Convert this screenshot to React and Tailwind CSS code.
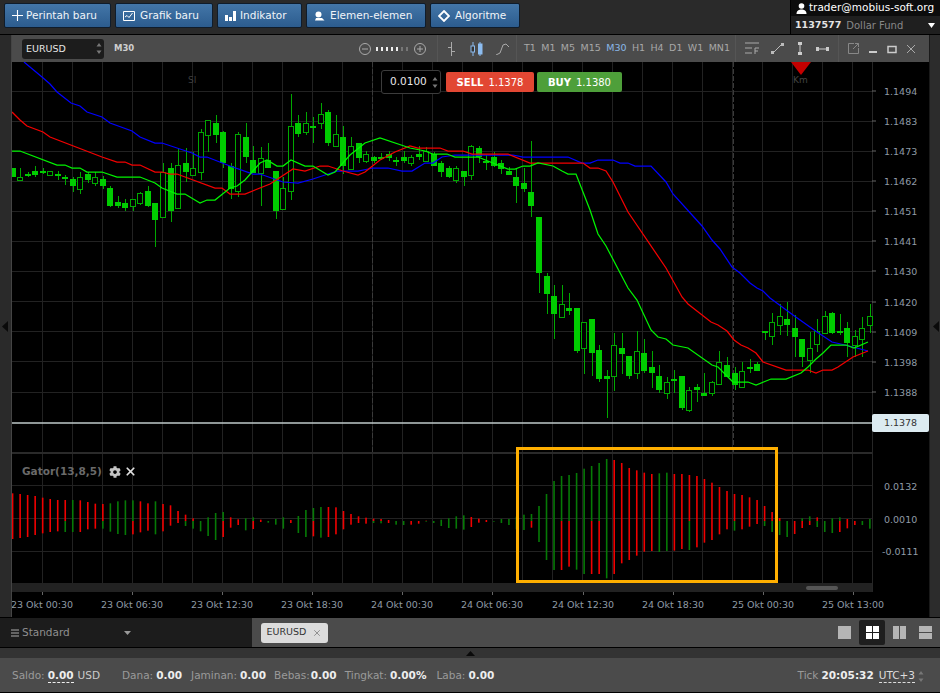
import { X } from 'lucide-react'
import { FaCog } from 'react-icons/fa'

// candles: [wickTop, bodyTop, bodyBottom, wickBottom, hollow]
const CANDLES = [
  [168,168,177,177,0],[168,177,180,180,1],[172,174,176,177,0],[166,171,175,177,0],[168,171,173,174,0],
  [171,171,175,175,1],[171,174,176,180,0],[175,177,178,185,0],[177,179,186,192,0],[172,177,189,194,1],
  [172,174,180,183,0],[172,177,183,186,1],[176,179,186,189,0],[186,188,206,207,0],[196,202,206,208,0],
  [199,203,208,211,0],[199,199,206,211,1],[192,193,203,205,1],[186,191,206,207,0],[203,203,220,247,0],
  [163,172,217,217,1],[163,168,211,222,0],[149,165,208,208,1],[148,163,172,182,0],[152,168,175,175,1],
  [129,132,172,180,1],[120,120,135,152,1],[115,123,135,143,0],[131,132,163,168,0],[163,166,189,199,0],
  [132,134,191,197,1],[123,137,157,163,0],[146,160,173,173,0],[147,158,173,206,1],[143,160,168,168,0],
  [171,171,211,219,0],[177,188,209,210,1],[94,126,191,200,1],[115,123,134,137,0],[112,123,132,135,1],
  [117,126,127,143,0],[103,114,123,129,1],[110,112,143,146,0],[115,134,146,147,1],[126,137,166,174,0],
  [137,146,169,169,1],[143,143,158,163,0],[151,154,161,163,1],[156,157,161,163,0],[153,157,158,160,0],
  [151,154,158,161,0],[157,160,161,166,0],[151,157,161,163,0],[155,157,163,166,1],[146,154,157,160,0],
  [147,151,161,162,1],[152,154,166,166,0],[161,163,172,177,0],[166,168,177,178,0],[166,168,180,183,1],
  [171,171,177,186,0],[145,146,175,180,1],[146,148,157,163,0],[155,161,162,170,0],[152,157,166,167,0],
  [160,163,169,174,0],[167,171,175,175,0],[168,177,186,203,0],[168,183,189,192,0],[141,192,206,217,0],
  [217,217,273,293,0],[273,276,294,314,0],[285,296,314,339,0],[285,304,317,317,1],[293,308,311,315,0],
  [308,308,351,353,0],[322,322,348,374,1],[319,319,353,376,0],[345,350,379,382,0],[370,376,379,418,0],
  [333,345,376,391,1],[333,348,354,374,0],[356,356,376,379,0],[331,351,373,379,1],[339,353,371,373,0],
  [351,367,373,388,0],[365,376,390,393,0],[377,382,393,399,1],[370,379,380,393,0],[376,376,408,410,0],
  [387,390,410,412,1],[384,387,390,402,0],[373,393,396,396,0],[381,382,393,396,1],[351,362,384,384,1],
  [357,365,377,377,0],[367,373,385,390,0],[362,371,387,387,1],[359,367,369,373,0],[362,364,371,371,0],
  [331,331,333,340,0],[313,322,336,345,1],[304,316,325,335,1],[302,319,325,336,0],[315,328,337,357,0],
  [339,339,357,367,0],[332,348,360,373,1],[319,331,344,352,1],[311,316,333,333,1],[312,313,333,334,0],
  [314,331,332,335,0],[322,328,343,357,0],[330,336,345,357,1],[317,328,339,357,1],[304,316,325,333,1],
]

const BLUE = '24,62 42,77 50,84 57,92 71,103 80,106 87,112 102,117 110,123 132,131 140,137 155,143 162,143 192,153 200,157 207,157 230,166 253,174 260,174 283,182 298,183 313,179 337,171 358,171 373,168 388,168 402,171 412,171 425,163 433,163 442,157 455,155 513,155 523,157 568,157 582,163 590,163 598,160 613,160 620,163 628,163 635,166 651,166 666,182 673,194 702,226 712,240 720,249 732,267 740,273 750,283 757,288 763,291 770,298 793,315 817,332 832,342 845,345 868,351'
const RED = '12,112 20,120 27,126 43,132 50,137 102,157 117,162 125,162 132,165 140,165 155,172 162,172 170,174 177,174 215,188 222,188 230,194 245,194 270,184 293,169 305,171 320,166 328,166 343,171 358,175 365,172 380,160 395,152 410,146 418,148 440,148 448,151 463,151 472,154 508,154 530,163 583,163 590,168 598,168 606,171 613,182 628,212 666,268 682,297 688,304 711,322 718,325 727,331 734,340 741,345 748,348 756,353 763,362 786,370 808,370 816,373 823,370 832,370 838,367 853,357 868,351'
const GREEN = '12,151 20,151 57,165 65,165 72,168 80,168 87,172 102,172 117,177 140,177 155,183 162,188 177,194 185,194 200,203 207,200 215,200 230,188 237,186 245,180 260,163 267,160 277,166 283,166 291,160 305,166 313,166 328,175 335,172 350,155 365,143 380,138 410,148 425,151 433,154 447,154 455,157 478,157 508,169 515,169 523,166 530,166 538,163 553,166 562,171 568,174 576,174 590,210 598,234 606,246 628,288 637,300 651,330 658,337 666,339 673,345 688,348 712,365 718,367 733,382 748,382 756,385 771,379 786,379 801,373 808,367 816,359 823,353 831,345 846,345 854,348 868,342'

// gator bars: [top, bottom, colours] in thirds of a pixel from y=440
const GATOR = [
  [160,297,'rr'],[162,294,'rr'],[165,291,'rr'],[168,285,'rr'],[173,280,'rr'],[177,276,'rr'],[180,274,'rr'],[180,276,'rg'],[180,276,'gg'],[181,276,'rr'],
  [186,268,'rr'],[191,266,'rr'],[192,266,'rg'],[190,275,'gg'],[184,282,'gg'],[181,285,'gg'],[181,283,'gr'],[184,277,'rr'],[190,272,'rr'],[184,283,'gg'],
  [192,274,'rr'],[196,257,'rr'],[213,249,'rr'],[224,258,'rg'],[235,266,'rg'],[243,274,'gg'],[232,288,'gg'],[219,300,'gg'],[216,291,'gr'],[232,263,'rr'],
  [238,255,'rr'],[235,271,'gg'],[232,267,'gr'],[239,246,'rr'],[243,248,'gg'],[237,254,'gg'],[232,266,'gg'],[240,249,'rr'],[228,279,'gg'],[210,291,'gg'],
  [204,289,'gr'],[201,293,'gg'],[201,291,'rr'],[202,283,'rr'],[213,268,'rr'],[222,254,'rr'],[229,249,'rr'],[233,251,'rr'],[236,249,'rg'],[237,250,'rg'],
  [240,249,'rr'],[243,254,'gg'],[243,255,'gg'],[243,254,'rr'],[243,251,'rr'],[242,245,'rg'],[243,249,'gg'],[239,258,'gg'],[235,264,'gg'],[229,266,'gg'],
  [226,269,'gg'],[231,261,'rr'],[236,248,'rr'],[240,246,'rr'],[243,245,'rg'],[237,249,'gg'],[237,255,'gg'],[230,268,'gg'],[224,270,'gg'],[222,263,'gr'],
  [198,306,'gg'],[162,360,'gg'],[123,390,'gg'],[108,390,'gr'],[105,380,'gr'],[99,389,'gg'],[86,402,'gg'],[78,402,'gr'],[69,402,'gr'],[57,415,'gg'],
  [60,402,'rr'],[69,370,'rr'],[84,360,'rr'],[91,347,'rr'],[98,335,'rr'],[102,333,'rr'],[100,336,'gg'],[98,333,'gg'],[102,332,'rr'],[102,327,'rr'],
  [105,330,'rg'],[108,322,'rr'],[117,308,'rr'],[128,300,'rr'],[141,283,'rr'],[153,268,'rr'],[162,272,'rg'],[165,268,'rr'],[172,260,'rr'],[180,252,'rr'],
  [198,258,'rg'],[216,276,'rg'],[234,285,'rg'],[243,291,'gg'],[243,282,'rr'],[235,264,'gr'],[229,255,'gr'],[232,261,'rg'],[243,276,'gg'],[235,279,'gg'],
  [232,276,'gr'],[237,265,'rr'],[243,255,'rr'],[243,255,'gg'],[237,266,'gg'],
]

const PRICES = [[91,'1.1494'],[121,'1.1483'],[151,'1.1473'],[181,'1.1462'],[211,'1.1451'],[241,'1.1441'],[271,'1.1430'],[302,'1.1420'],[332,'1.1409'],[362,'1.1398'],[392,'1.1388']]
const TIMES = [[42,'23 Okt 00:30'],[132,'23 Okt 06:30'],[222,'23 Okt 12:30'],[312,'23 Okt 18:30'],[402,'24 Okt 00:30'],[492,'24 Okt 06:30'],[583,'24 Okt 12:30'],[673,'24 Okt 18:30'],[763,'25 Okt 00:30'],[853,'25 Okt 13:00']]
const FRAMES = ['T1','M1','M5','M15','M30','H1','H4','D1','W1','MN1']
const VLINES = Array.from({ length: 28 }, (_, i) => 42 + i * 30.03)
const HLINES = Array.from({ length: 11 }, (_, i) => 91 + i * 30.1)
const barX = i => 12.6 + i * 7.52

function ToolButton({ icon, label, className }) {
  return (
    <button className={`h-[25px] flex items-center pl-[7px] rounded-[2px] border border-[#0f1c2b] bg-gradient-to-b from-[#4376a8] to-[#2c5c8e] text-[#f0f4f8] text-[10.5px] font-['DejaVu_Sans',sans-serif] ${className}`}>
      {icon}
      <span>{label}</span>
    </button>
  )
}

function Spin() {
  return (
    <svg width="6" height="13" viewBox="0 0 6 13" fill="#777">
      <path d="M3 1 L5.5 4.5 H0.5 Z M3 12 L5.5 8.5 H0.5 Z" />
    </svg>
  )
}

function Chart() {
  return (
    <svg className="block" width="917" height="555" viewBox="12 62 917 555" fontFamily="'DejaVu Sans',sans-serif">
      <rect x="12" y="62" width="917" height="555" fill="#000" />
      <g stroke="#222" shapeRendering="crispEdges">
        {HLINES.map(y => <line key={y} x1="12" x2="872" y1={y} y2={y} />)}
        {VLINES.map(x => <line key={x} x1={x} x2={x} y1="62" y2="583" />)}
        <line x1="12" x2="872" y1="485" y2="485" />
        <line x1="12" x2="872" y1="518" y2="518" />
        <line x1="12" x2="872" y1="551" y2="551" />
        <line x1="872" x2="872" y1="62" y2="592" stroke="#262626" />
      </g>
      <g stroke="#3a3a3a" strokeDasharray="5 2" shapeRendering="crispEdges">
        <line x1="372" x2="372" y1="62" y2="452" />
        <line x1="733" x2="733" y1="62" y2="452" />
      </g>

      {CANDLES.map(([wt, bt, bb, wb, hollow], i) => {
        const x = Math.round(barX(i))
        return (
          <g key={i} shapeRendering="crispEdges">
            <line x1={x} x2={x} y1={wt} y2={wb} stroke="#00a800" />
            {hollow
              ? <rect x={x - 2.5} y={bt + 0.5} width="5" height={bb - bt} fill="#000" stroke="#00a800" />
              : <rect x={x - 3} y={bt} width="6" height={Math.max(bb - bt, 2)} fill="#00cc00" />}
          </g>
        )
      })}

      <polyline points={BLUE} fill="none" stroke="#0000ff" strokeWidth="1.25" />
      <polyline points={RED} fill="none" stroke="#f40000" strokeWidth="1.25" />
      <polyline points={GREEN} fill="none" stroke="#00f400" strokeWidth="1.25" />

      <line x1="12" x2="872" y1="423" y2="423" stroke="#bfcaca" strokeWidth="1.5" />
      <rect x="12" y="452" width="860" height="2" fill="#2a2a2a" />

      {GATOR.map(([top, bottom, c], i) => {
        const x = barX(i) - 0.8
        const mid = 521
        const y1 = 440 + top / 3
        const y2 = 440 + bottom / 3
        return (
          <g key={i}>
            <rect x={x} y={y1} width="1.6" height={Math.max(mid - y1, 0)} fill={c[0] === 'r' ? '#f00000' : '#067a06'} />
            <rect x={x} y={mid} width="1.6" height={Math.max(y2 - mid, 0)} fill={c[1] === 'r' ? '#f00000' : '#067a06'} />
          </g>
        )
      })}

      <rect x="12" y="583" width="860" height="9" fill="#222" />
      <rect x="806" y="586" width="32" height="4" rx="2" fill="#555" />

      <g fill="#8f9ba6" fontSize="9.5">
        {PRICES.map(([y, t]) => (
          <g key={t}>
            <rect x="872" y={y - 0.5} width="4" height="1" fill="#666" />
            <text x="884" y={y + 3.5}>{t}</text>
          </g>
        ))}
        <text x="884" y="490">0.0132</text>
        <text x="884" y="523">0.0010</text>
        <text x="882" y="555">-0.0111</text>
        {TIMES.map(([x, t]) => (
          <g key={t}>
            <rect x={x} y="592" width="1" height="3" fill="#666" />
            <text x={x} y="608" textAnchor="middle">{t}</text>
          </g>
        ))}
      </g>
      <text x="188" y="83" fontSize="9" fill="#3f3f3f">SI</text>
      <path d="M791 62 H811 L801 75 Z" fill="#c40000" />
      <text x="793" y="83" fontSize="9" fill="#444">Km</text>
    </svg>
  )
}

export default function App() {
  return (
    <div className="w-[940px] h-[693px] flex flex-col bg-[#2a2a2a] overflow-hidden font-['DejaVu_Sans',sans-serif] text-[10.5px]">
      {/* top bar */}
      <div className="h-[35px] flex justify-between border-b border-black">
        <div className="flex gap-[4px] pl-[4px] pt-[3px] items-start">
          <ToolButton className="w-[107px] gap-[3px]" label="Perintah baru" icon={
            <svg width="11" height="11" viewBox="0 0 11 11" stroke="#fff" strokeWidth="1.1"><path d="M5.5 0 V11 M0 5.5 H11" /></svg>
          } />
          <ToolButton className="w-[98px] gap-[5px]" label="Grafik baru" icon={
            <svg width="12" height="12" viewBox="0 0 12 12" fill="none" stroke="#fff"><path d="M0.5 1.5 H11.5 V10.5 H0.5 Z" /><path d="M2 7 L4 5.5 L6 7.5 L9.5 3" /></svg>
          } />
          <ToolButton className="w-[85px] gap-[4px]" label="Indikator" icon={
            <svg width="11" height="11" viewBox="0 0 11 11" fill="#fff"><path d="M0 5 H3 V11 H0 Z M4 7 H7 V11 H4 Z M8 1 H11 V11 H8 Z" /></svg>
          } />
          <ToolButton className="w-[120px] gap-[5px]" label="Elemen-elemen" icon={
            <svg width="11" height="11" viewBox="0 0 11 11" fill="#fff"><circle cx="4.5" cy="4.5" r="3" /><path d="M2 8 H8 L10.5 10.5 H1 Z" /></svg>
          } />
          <ToolButton className="w-[90px] gap-[5px]" label="Algoritme" icon={
            <svg width="12" height="12" viewBox="0 0 12 12" fill="none" stroke="#fff" strokeWidth="1.8"><path d="M6 1 L11 6 L6 11 L1 6 Z" /></svg>
          } />
        </div>
        <div className="w-[150px] h-[34px] flex flex-col bg-[#1f1f1f] border-l border-black">
          <div className="h-[16px] bg-[#0c0c0c] flex items-center gap-[2px] pl-[5px] text-white text-[10.5px] font-medium">
            <svg width="11" height="11" viewBox="0 0 11 11" fill="#fff"><circle cx="5.5" cy="3" r="2.8" /><path d="M0.5 11 C0.5 7.5 3 6.5 5.5 6.5 C8 6.5 10.5 7.5 10.5 11 Z" /></svg>
            <span>trader@mobius-soft.org</span>
          </div>
          <div className="flex-1 flex items-center pl-[4px] pr-[5px] text-[10px]">
            <span className="text-[#e4e4e4] font-bold text-[9.5px]">1137577</span>
            <span className="text-[#888] ml-[5px]">Dollar Fund</span>
            <svg className="ml-auto" width="7" height="5" viewBox="0 0 7 5" fill="#fff"><path d="M0 0 H7 L3.5 5 Z" /></svg>
          </div>
        </div>
      </div>

      {/* chart window with its two side rails */}
      <div className="flex h-[582px]">
        <div className="w-[12px] flex items-center border-r border-[#444] bg-[#2a2a2a]">
          <svg className="ml-[2px]" width="6" height="11" viewBox="0 0 6 11" fill="#0a0a0a"><path d="M6 0 V11 L0 5.5 Z" /></svg>
        </div>
        <div className="w-[917px] flex flex-col">
          <div className="h-[27px] flex items-center bg-[#4b4b4b] text-[9.5px] text-[#a8a8a8]">
            <div className="ml-[10px] w-[82px] h-[20px] flex items-center justify-between pl-[4px] pr-[2px] bg-[#1c1c1c] rounded-[3px] text-[#e6e6e6]">
              <span className="font-medium pt-[1px]">EURUSD</span>
              <Spin />
            </div>
            <span className="ml-[10px] font-bold text-[#cfcfcf] text-[8.5px]">M30</span>
            <div className="ml-auto flex items-center gap-[5.5px]">
              <svg width="12" height="12" viewBox="0 0 12 12" fill="none" stroke="#aaa"><circle cx="6" cy="6" r="5.5" /><path d="M3 6 H9" /></svg>
              <svg width="32" height="6" viewBox="0 0 32 6">
                <path d="M1 1 V5 M6 1 V5 M11 1 V5 M16 1 V5 M21 1 V5" stroke="#eee" strokeWidth="2" />
                <path d="M26 1 V5 M31 1 V5" stroke="#777" strokeWidth="2" />
              </svg>
              <svg width="12" height="12" viewBox="0 0 12 12" fill="none" stroke="#aaa"><circle cx="6" cy="6" r="5.5" /><path d="M3 6 H9 M6 3 V9" /></svg>
            </div>
            <div className="ml-[11px] h-full flex items-center gap-[13px] pl-[8px] pr-[7px] border-l border-[#555]">
              <svg width="11" height="14" viewBox="0 0 11 14" stroke="#aaa" fill="none"><path d="M5.5 0 V14 M2 5.5 H5.5 M5.5 9.5 H9" /></svg>
              <svg width="13" height="14" viewBox="0 0 13 14" fill="#8cbcf0" stroke="#8cbcf0"><path d="M3 0 V14 M10 0 V14" /><rect x="1" y="4" width="3.5" height="6" fill="#333" /><rect x="8.5" y="2" width="3.5" height="10" /></svg>
              <svg width="13" height="12" viewBox="0 0 13 12" fill="none" stroke="#aaa"><path d="M0 12 L4 10 L7 2 L10 1 L13 4" /></svg>
            </div>
            <div className="h-full flex items-center gap-[5.4px] pl-[7px] pr-[5px] border-l border-[#555] font-medium">
              {FRAMES.map(t => <span key={t} className={t === 'M30' ? 'text-[#8ab8e8]' : ''}>{t}</span>)}
            </div>
            <div className="h-full flex items-center gap-[12px] pl-[9px] pr-[9px] border-l border-[#555]">
              <svg width="14" height="13" viewBox="0 0 14 13" stroke="#aaa" fill="none"><path d="M0 1 H14 M0 6 H7 M0 11 H7 M10 12 V6 H14 M10 9 H13" /></svg>
              <svg width="13" height="13" viewBox="0 0 13 13" stroke="#bbb" fill="#bbb"><path d="M2 11 L11 2" /><rect x="0.5" y="9.5" width="2" height="2" /><rect x="10.5" y="1.5" width="2" height="2" /></svg>
              <svg width="8" height="13" viewBox="0 0 8 13" stroke="#ccc" fill="#ccc"><path d="M4 1 V12" /><rect x="2.5" y="0.5" width="3" height="2" /><rect x="2.5" y="10.5" width="3" height="2" /></svg>
              <svg width="13" height="8" viewBox="0 0 13 8" stroke="#ccc" fill="#ccc"><path d="M1 4 H12" /><rect x="0.5" y="2.5" width="2" height="3" /><rect x="10.5" y="2.5" width="2" height="3" /></svg>
            </div>
            <div className="h-full flex items-center gap-[9px] pl-[9px] pr-[13px] border-l border-[#555]">
              <svg width="11" height="11" viewBox="0 0 11 11" fill="none" stroke="#888"><path d="M6 0.5 H0.5 V10.5 H10.5 V5 M5 6 L10.5 0.5 M7 0.5 H10.5 V4" /></svg>
              <svg width="10" height="10" viewBox="0 0 10 10" fill="#ccc"><rect x="1" y="7" width="8" height="2" /></svg>
              <svg width="10" height="10" viewBox="0 0 10 10" fill="none" stroke="#ccc"><rect x="1" y="2.5" width="8" height="6" strokeWidth="1.5" /></svg>
              <svg width="10" height="10" viewBox="0 0 10 10" stroke="#aaa"><path d="M1 1 L9 9 M9 1 L1 9" /></svg>
            </div>
          </div>

          <div className="relative">
            <Chart />

            <div className="absolute left-[369px] top-[8px] flex items-center gap-[5px]">
              <div className="w-[60px] h-[24px] flex items-center justify-between pl-[8px] pr-[2px] bg-black border border-[#3c3c3c] rounded-[3px] text-[#e8e8e8] text-[10.5px]">
                <span>0.0100</span>
                <Spin />
              </div>
              <div className="w-[88px] h-[20px] flex items-center justify-center gap-[5px] bg-[#e24733] rounded-[2px] text-white text-[10px]">
                <b>SELL</b><span>1.1378</span>
              </div>
              <div className="w-[85px] h-[20px] -ml-[2px] flex items-center justify-center gap-[5px] bg-[#4e9f3a] rounded-[2px] text-white text-[10px]">
                <b>BUY</b><span>1.1380</span>
              </div>
            </div>

            <div className="absolute left-[860px] top-[352px] w-[57px] h-[18px] flex items-center justify-center bg-[#dcebf1] rounded-[2px] text-[#333] text-[9.5px]">1.1378</div>

            <div className="absolute left-[10px] top-[402px] flex items-center text-[#6a6a6a] text-[10.5px] font-bold">
              <span>Gator(13,8,5)</span>
              <FaCog className="ml-[7px] text-[#c4c4c4]" size={12} />
              <X className="ml-[3px] text-[#e0e0e0]" size={13} strokeWidth={3.2} />
            </div>

            <div className="absolute left-[504px] top-[385px] w-[262px] h-[136px] border-[3px] border-[#ffaf00]" />
          </div>
        </div>
        <div className="w-[11px] flex items-center border-l border-[#1a1a1a] bg-[#2c2c2c]">
          <svg className="ml-[3px]" width="6" height="11" viewBox="0 0 6 11" fill="#0a0a0a"><path d="M6 0 V11 L0 5.5 Z" /></svg>
        </div>
      </div>

      {/* tabs */}
      <div className="h-[31px] flex border-y border-black">
        <div className="w-[252px] flex items-center bg-[#1c1c1c] pl-[11px] pt-[1px] text-[#8f8f8f]">
          <svg width="8" height="8" viewBox="0 0 8 8" stroke="#aaa"><path d="M0 1 H8 M0 4 H8 M0 7 H8" /></svg>
          <span className="ml-[3px]">Standard</span>
          <svg className="ml-[54px]" width="7" height="4" viewBox="0 0 7 4" fill="#999"><path d="M0 0 H7 L3.5 4 Z" /></svg>
        </div>
        <div className="flex-1 flex items-center bg-[#4b4b4b]">
          <div className="ml-[9px] w-[67px] h-[20px] flex items-center justify-center gap-[6px] bg-[#dcdcdc] rounded-[3px] text-[#333] text-[9.5px] font-medium">
            <span>EURUSD</span>
            <X size={10} strokeWidth={1.2} className="text-[#444]" />
          </div>
          <div className="ml-auto flex items-center gap-[3px] pr-[3px]">
            <div className="w-[23px] h-[24px] flex items-center justify-center">
              <div className="w-[13px] h-[13px] bg-[#b5b5b5]" />
            </div>
            <div className="w-[26px] h-[25px] flex items-center justify-center bg-[#1e1e1e] rounded-[2px]">
              <div className="w-[13px] h-[13px] grid grid-cols-2 gap-[1px]">
                <div className="bg-white" /><div className="bg-white" /><div className="bg-white" /><div className="bg-white" />
              </div>
            </div>
            <div className="w-[23px] h-[24px] flex items-center justify-center">
              <div className="w-[13px] h-[13px] grid grid-cols-2 gap-[1px]">
                <div className="bg-[#b5b5b5]" /><div className="bg-[#b5b5b5]" />
              </div>
            </div>
            <div className="w-[23px] h-[24px] flex items-center justify-center">
              <div className="w-[13px] h-[13px] grid grid-rows-2 gap-[1px]">
                <div className="bg-[#b5b5b5]" /><div className="bg-[#b5b5b5]" />
              </div>
            </div>
          </div>
        </div>
      </div>

      {/* strip */}
      <div className="h-[10px] flex justify-center items-center bg-[#333]">
        <svg width="9" height="5" viewBox="0 0 9 5" fill="#0a0a0a"><path d="M4.5 0 L9 5 H0 Z" /></svg>
      </div>

      {/* account line */}
      <div className="flex-1 flex items-center bg-[#4b4b4b] border-b border-black pt-[2px] pl-[12px] pr-[16px] text-[#9a9a9a]">
        <span>Saldo:</span>
        <b className="ml-[3px] text-[#eee] border-b border-dashed border-[#eee] leading-[13px]">0.00</b>
        <span className="ml-[4px] text-[#ccc]">USD</span>
        <span className="ml-[22px]">Dana:</span><b className="ml-[3px] text-[#eee]">0.00</b>
        <span className="ml-[9px]">Jaminan:</span><b className="ml-[3px] text-[#eee]">0.00</b>
        <span className="ml-[8px]">Bebas:</span><b className="ml-[1px] text-[#eee]">0.00</b>
        <span className="ml-[8px]">Tingkat:</span><b className="ml-[3px] text-[#eee]">0.00%</b>
        <span className="ml-[10px]">Laba:</span><b className="ml-[3px] text-[#eee]">0.00</b>
        <span className="ml-auto">Tick</span>
        <b className="ml-[3px] text-[#eee]">20:05:32</b>
        <span className="ml-[5px] text-[#ddd] border-b border-dashed border-[#ddd] leading-[13px]">UTC+3</span>
        <span className="ml-[3px]"><Spin /></span>
      </div>
    </div>
  )
}
